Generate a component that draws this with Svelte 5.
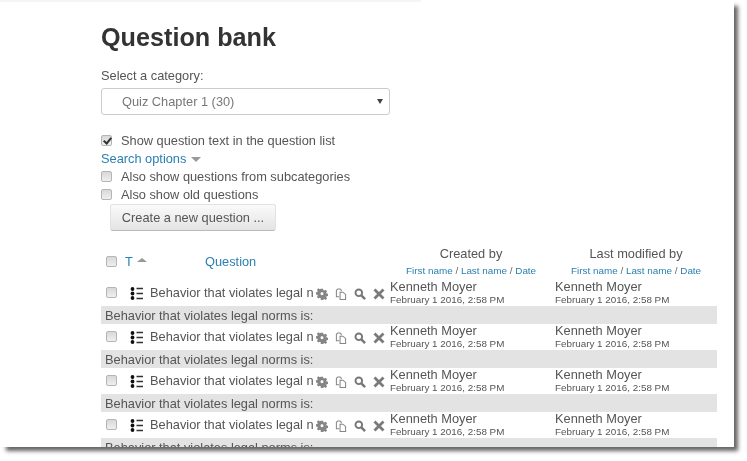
<script>
  const rows = [0, 1, 2, 3];
  const who = ['Kenneth Moyer', 'Kenneth Moyer'];
</script>

<div class="page">
  <div class="topstrip"></div>
  <main class="sheet">
    <h1>Question bank</h1>
    <label class="catlabel" for="cat">Select a category:</label>
    <div class="select" id="cat"><span>Quiz Chapter 1 (30)</span><i class="caret"></i></div>

    <div class="opts">
      <label class="opt"><input type="checkbox" checked /><span>Show question text in the question list</span></label>
      <div class="search"><a href="#s">Search options</a><i class="tri"></i></div>
      <label class="opt"><input type="checkbox" /><span>Also show questions from subcategories</span></label>
      <label class="opt"><input type="checkbox" /><span>Also show old questions</span></label>
    </div>
    <button class="create">Create a new question ...</button>

    <div class="thead">
      <div class="c-check"><input type="checkbox" /></div>
      <div class="c-type"><a href="#t">T</a><i class="sort"></i></div>
      <div class="c-q"><a href="#q">Question</a></div>
      <div class="c-user">
        <div class="uh">Created by</div>
        <div class="us"><a href="#f">First name</a> / <a href="#l">Last name</a> / <a href="#d">Date</a></div>
      </div>
      <div class="c-user">
        <div class="uh">Last modified by</div>
        <div class="us"><a href="#f">First name</a> / <a href="#l">Last name</a> / <a href="#d">Date</a></div>
      </div>
    </div>

    {#each rows as r (r)}
      <div class="row">
        <div class="c-check"><input type="checkbox" /></div>
        <div class="c-icon">
          <svg width="14" height="13" viewBox="0 0 14 13" aria-hidden="true">
            <circle cx="2.5" cy="2" r="1.9" fill="#111" />
            <circle cx="2.5" cy="6.5" r="1.9" fill="#111" />
            <circle cx="2.5" cy="11" r="1.9" fill="#111" />
            <path d="M6.5 1.5h6.5M6.5 6.5h6.5M6.5 11.5h6.5" stroke="#333" stroke-width="1.3" />
          </svg>
        </div>
        <div class="qname">Behavior that violates legal norms is:</div>
        <div class="actions">
          <svg width="12" height="12" viewBox="0 0 13 13" aria-hidden="true">
            <path fill="#858585" fill-rule="evenodd" d="M5.3.8h2.4l.3 1.6 1 .4 1.4-.9 1.6 1.6-.9 1.4.4 1 1.6.3v2.4l-1.6.3-.4 1 .9 1.4-1.6 1.6-1.4-.9-1 .4-.3 1.6H5.3L5 10.9l-1-.4-1.4.9L1 9.8l.9-1.4-.4-1L0 7.1V4.7l1.5-.3.4-1L1 2l1.6-1.6L4 1.3l1-.4zM6.5 4.6a1.6 1.6 0 1 0 0 3.2 1.6 1.6 0 0 0 0-3.2z" />
          </svg>
          <svg width="12" height="12" viewBox="0 0 13 13" aria-hidden="true">
            <path fill="none" stroke="#858585" stroke-width="1.1" d="M4.5 9.5h-3V2.5L3 1h2.6l1.2 1.3v1.2M5.5 4.5h3l3 2.4v5.6h-6z" />
          </svg>
          <svg width="12" height="12" viewBox="0 0 13 13" aria-hidden="true">
            <circle cx="5.2" cy="5.2" r="3.6" fill="none" stroke="#767676" stroke-width="2" />
            <path d="M8 8l4 4" stroke="#767676" stroke-width="2.6" />
          </svg>
          <svg width="12" height="12" viewBox="0 0 12 12" aria-hidden="true">
            <path d="M1.5 1.5l9 9M10.5 1.5l-9 9" stroke="#7a7a7a" stroke-width="2.8" />
          </svg>
        </div>
        {#each who as name}
          <div class="c-user person">
            <div class="pname">{name}</div>
            <div class="pdate">February 1 2016, 2:58 PM</div>
          </div>
        {/each}
      </div>
      <div class="strip">Behavior that violates legal norms is:</div>
    {/each}
  </main>
</div>

<style>
  :global(body) {
    margin: 0;
    background: #fff;
  }
  .page {
    position: relative;
    width: 747px;
    height: 461px;
    overflow: hidden;
    background: #fff;
    font-family: "Liberation Sans", Arial, sans-serif;
    font-size: 12.8px;
    color: #555;
  }
  .topstrip {
    height: 2px;
    width: 421px;
    background: #f5f5f5;
    position: absolute;
    top: 0;
    left: 0;
    z-index: 1;
  }
  .sheet {
    box-sizing: border-box;
    width: 734px;
    height: 447px;
    padding: 0 0 0 101px;
    background: #fff;
    overflow: hidden;
    box-shadow: 5px 5px 4px -1px #666;
    filter: blur(0.35px);
  }
  h1 {
    margin: 0;
    padding-top: 23px;
    font-size: 25.2px;
    line-height: 28px;
    font-weight: 700;
    color: #333;
  }
  .catlabel {
    display: block;
    margin-top: 17px;
    line-height: 16px;
  }
  .select {
    box-sizing: border-box;
    margin-top: 4px;
    width: 289px;
    height: 27px;
    border: 1px solid #ccc;
    border-radius: 3px;
    display: flex;
    align-items: center;
    justify-content: space-between;
    padding: 0 6px 0 20px;
    color: #777;
  }
  .caret {
    border-left: 3px solid transparent;
    border-right: 3px solid transparent;
    border-top: 5px solid #444;
  }
  .opts {
    margin-top: 16px;
  }
  .opt,
  .search {
    display: flex;
    align-items: center;
    height: 18px;
  }
  .opt span {
    margin-left: 9px;
  }
  input {
    appearance: none;
    box-sizing: border-box;
    width: 11px;
    height: 11px;
    margin: 0;
    border: 1px solid #b5b5b5;
    border-radius: 2px;
    background: linear-gradient(#d8d8d8, #efefef);
    display: block;
    position: relative;
    flex: none;
  }
  input:checked::after {
    content: "";
    position: absolute;
    left: 3px;
    top: 0;
    width: 3px;
    height: 6px;
    border: solid #333;
    border-width: 0 2px 2px 0;
    transform: rotate(40deg);
  }
  a {
    color: #2a7fb0;
    text-decoration: none;
  }
  .tri {
    margin-left: 5px;
    margin-top: 2px;
    border-left: 5.5px solid transparent;
    border-right: 5.5px solid transparent;
    border-top: 5px solid #999;
  }
  .create {
    display: block;
    margin: 1px 0 0 9px;
    box-sizing: border-box;
    width: 166px;
    height: 27px;
    padding: 0;
    border: 1px solid #e2e2e2;
    border-bottom-color: #bbb;
    border-radius: 3px;
    background: linear-gradient(#fafafa, #e4e4e4);
    font: inherit;
    color: #555;
  }
  .thead,
  .row {
    display: grid;
    grid-template-columns: 23px 26px 163px 77px 165px 162px;
    width: 616px;
  }
  .thead {
    height: 34px;
    margin-top: 15px;
    grid-template-columns: 24px 80px 185px 165px 162px;
  }
  .thead .c-check {
    padding: 10px 0 0 5px;
  }
  .c-type {
    padding-top: 8px;
    display: flex;
    align-items: flex-start;
  }
  .sort {
    margin: 4px 0 0 4px;
    border-left: 5px solid transparent;
    border-right: 5px solid transparent;
    border-bottom: 4px solid #999;
  }
  .c-q {
    padding-top: 8px;
  }
  .thead .c-user {
    text-align: center;
    width: 130px;
    margin-left: 16px;
  }
  .uh {
    line-height: 16px;
    color: #555;
    white-space: nowrap;
  }
  .us {
    margin-top: 3px;
    font-size: 9.9px;
    line-height: 12px;
    color: #666;
    white-space: nowrap;
  }
  .row {
    height: 26px;
    background: #fff;
  }
  .row .c-check {
    padding: 7px 0 0 5px;
  }
  .c-icon {
    padding-top: 7px;
    padding-left: 6px;
  }
  .qname {
    line-height: 26px;
    white-space: nowrap;
    overflow: hidden;
  }
  .actions {
    display: flex;
    align-items: center;
    gap: 7px;
    padding: 1px 0 0 3px;
  }
  .person {
    overflow: hidden;
    white-space: nowrap;
  }
  .pname {
    line-height: 14px;
  }
  .pdate {
    font-size: 9.85px;
    line-height: 12px;
  }
  .strip {
    box-sizing: border-box;
    width: 616px;
    height: 18px;
    line-height: 18px;
    padding: 1px 0 0 4px;
    background: #e3e3e3;
    color: #555;
    white-space: nowrap;
    overflow: hidden;
  }
</style>
